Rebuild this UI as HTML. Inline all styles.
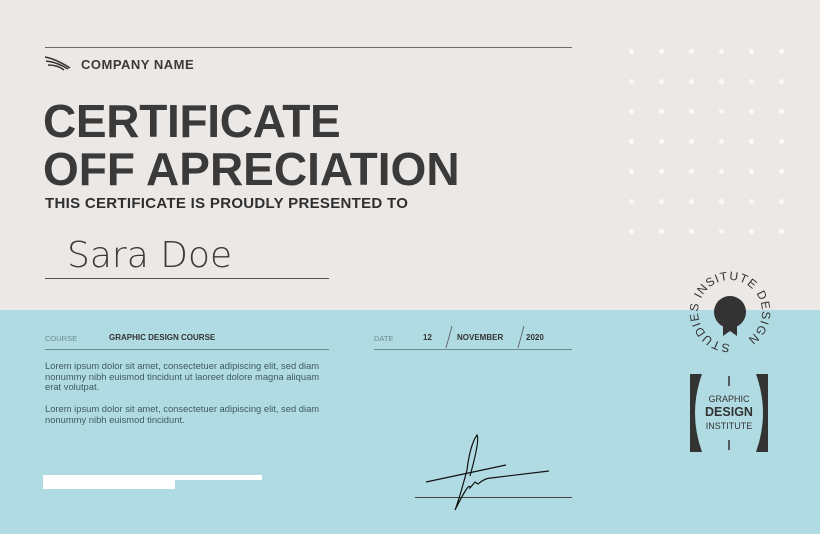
<!DOCTYPE html><html><head><style>
body{margin:0;width:820px;height:534px;overflow:hidden;position:relative;background:#ebe8e6;font-family:"Liberation Sans",sans-serif;color:#3a3a3a}
.blue{position:absolute;left:0;top:310px;width:820px;height:224px;background:#b1dbe3}
.a{position:absolute}
.dot{position:absolute;width:5px;height:5px;border-radius:50%;background:#fbf8f6}
.lorem{font-size:9.4px;line-height:10.5px;color:#3e5a62}
</style></head><body>
<div class="blue"></div>
<div class="a" style="left:45px;top:47px;width:527px;height:1px;background:#6b6b6b"></div>
<svg class="a" style="left:44px;top:55px" width="28" height="16"><path d="M1 2 Q12 4 26 13 M2 6 Q13 7 24 14 M4 10 Q14 10 20 15" stroke="#333" stroke-width="1.6" fill="none"/></svg>
<div class="a" style="left:81px;top:57px;font-size:13px;font-weight:bold;color:#3a3a3a;letter-spacing:0.5px">COMPANY NAME</div>
<div class="a" style="left:43px;top:97px;font-size:46px;font-weight:bold;line-height:48px;color:#3a3a3a;letter-spacing:-0.3px">CERTIFICATE<br><span style="letter-spacing:0">OFF APRECIATION</span></div>
<div class="a" style="left:45px;top:195px;font-size:15px;font-weight:bold;color:#2f2f2f;letter-spacing:0.3px">THIS CERTIFICATE IS PROUDLY PRESENTED TO</div>
<div class="a" style="left:67px;top:235px;font-size:36px;font-weight:300;color:#3a3a3a;font-family:'DejaVu Sans',sans-serif">Sara Doe</div>
<div class="a" style="left:45px;top:278px;width:284px;height:1px;background:#555"></div>
<div class="a" style="left:45px;top:334px;font-size:7.5px;color:#6a8a92">COURSE</div>
<div class="a" style="left:109px;top:333px;font-size:8px;font-weight:bold;color:#333">GRAPHIC DESIGN COURSE</div>
<div class="a" style="left:45px;top:349px;width:284px;height:1px;background:#6a8a92"></div>
<div class="a" style="left:374px;top:334px;font-size:7.5px;color:#6a8a92">DATE</div>
<div class="a" style="left:423px;top:333px;font-size:8px;font-weight:bold;color:#333">12</div>
<div class="a" style="left:457px;top:333px;font-size:8px;font-weight:bold;color:#333">NOVEMBER</div>
<div class="a" style="left:526px;top:333px;font-size:8px;font-weight:bold;color:#333">2020</div>
<svg class="a" style="left:440px;top:324px" width="90" height="26"><path d="M12 2 L6 24 M84 2 L78 24" stroke="#555" stroke-width="0.8"/></svg>
<div class="a" style="left:374px;top:349px;width:198px;height:1px;background:#6a8a92"></div>
<div class="a lorem" style="left:45px;top:361px">Lorem ipsum dolor sit amet, consectetuer adipiscing elit, sed diam<br>nonummy nibh euismod tincidunt ut laoreet dolore magna aliquam<br>erat volutpat.</div>
<div class="a lorem" style="left:45px;top:404px">Lorem ipsum dolor sit amet, consectetuer adipiscing elit, sed diam<br>nonummy nibh euismod tincidunt.</div>
<div class="a" style="left:43px;top:475px;width:219px;height:5px;background:#fff"></div>
<div class="a" style="left:43px;top:475px;width:132px;height:14px;background:#fff"></div>
<div class="a" style="left:415px;top:497px;width:157px;height:1px;background:#444"></div>
<svg class="a" style="left:415px;top:430px" width="140" height="85"><path d="M11 52 L91 35 M55 46 Q65 10 62 5 Q55 15 52 40 Q44 70 40 80 Q55 50 55 58 L60 52 L63 54 Q70 48 76 48 L134 41" stroke="#111" stroke-width="1.2" fill="none"/></svg>
<svg class="a" style="left:680px;top:262px" width="100" height="100">
<defs><path id="c" d="M50 82 A32 32 0 1 1 50.1 82"/></defs>
<circle cx="50" cy="50" r="16" fill="#333"/>
<path d="M43 62 L43 74 L50 69 L57 74 L57 62Z" fill="#333"/>
<text font-size="12" fill="#333" letter-spacing="1" font-family="Liberation Sans"><textPath href="#c" startOffset="0">STUDIES INSITUTE DESIGN</textPath></text>
</svg>
<svg class="a" style="left:690px;top:374px" width="78" height="78">
<path d="M0 0 H12 Q-2 39 12 78 H0Z M78 0 H66 Q80 39 66 78 H78Z" fill="#333"/>
<path d="M39 2 V12 M39 66 V76" stroke="#333" stroke-width="1.5"/>
<text x="39" y="28" font-size="9" text-anchor="middle" fill="#333" font-family="Liberation Sans">GRAPHIC</text>
<text x="39" y="42" font-size="12.5" font-weight="bold" text-anchor="middle" fill="#333" font-family="Liberation Sans">DESIGN</text>
<text x="39" y="55" font-size="9" text-anchor="middle" fill="#333" font-family="Liberation Sans">INSTITUTE</text>
</svg>
<div id="dots"></div>
<script>
var d=document.getElementById('dots'),h='';
for(var r=0;r<7;r++)for(var c=0;c<6;c++)h+='<div class="dot" style="left:'+(629+c*30)+'px;top:'+(49+r*30)+'px"></div>';
d.innerHTML=h;
</script>
</body></html>
